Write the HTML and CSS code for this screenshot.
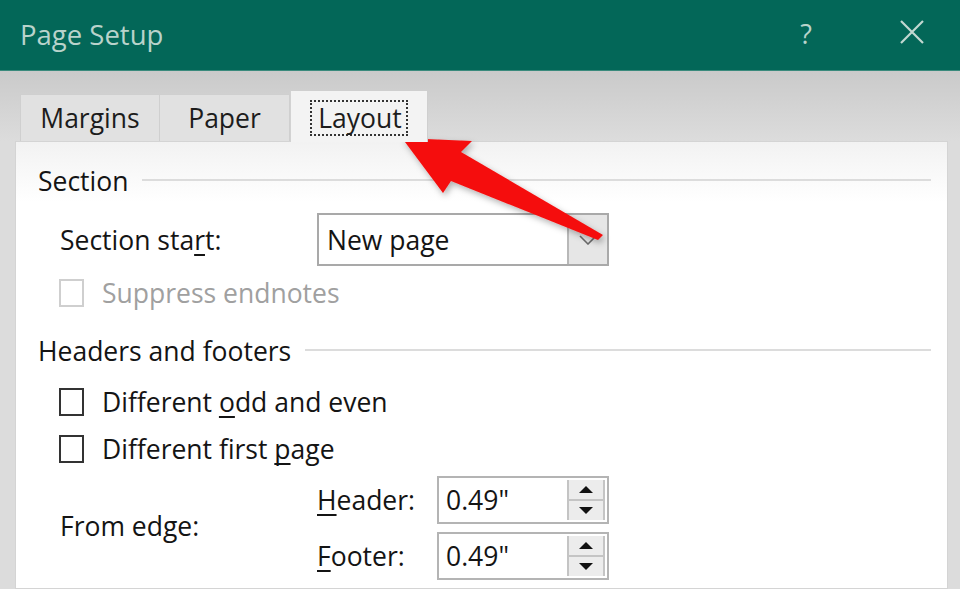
FILE: index.html
```html
<!DOCTYPE html>
<html lang="en">
<head>
<meta charset="utf-8">
<title>Page Setup</title>
<link rel="stylesheet" href="styles.css">
</head>
<body>
<div class="dialog">
  <header class="titlebar">
    <span class="title">Page Setup</span>
    <span class="help">?</span>
    <svg class="close" width="26" height="26" viewBox="0 0 26 26"><path d="M2 2L24 24M24 2L2 24" stroke="#c2d8d1" stroke-width="2.2" fill="none"/></svg>
  </header>
  <div class="body">
    <nav class="tabs">
      <div class="tab">Margins</div>
      <div class="tab">Paper</div>
      <div class="tab active"><span class="focus">Layout</span></div>
    </nav>
    <main class="panel">
      <div class="legend"><span>Section</span><i class="rule"></i></div>
      <div class="row start-row">
        <span class="label">Section sta<u>r</u>t:</span>
        <div class="select"><span class="value">New page</span><span class="drop"><svg width="18" height="10" viewBox="0 0 18 10"><path d="M1 1L9 9L17 1" stroke="#6a6a6a" stroke-width="1.6" fill="none"/></svg></span></div>
      </div>
      <label class="check disabled"><span class="box"></span><span>Suppress endnotes</span></label>
      <div class="legend legend2"><span>Headers and footers</span><i class="rule"></i></div>
      <label class="check"><span class="box"></span><span>Different <u>o</u>dd and even</span></label>
      <label class="check second"><span class="box"></span><span>Different first <u>p</u>age</span></label>
      <div class="edge">
        <span class="edge-label">From edge:</span>
        <span class="sub sub1"><u>H</u>eader:</span>
        <div class="spin spin1"><span class="value">0.49"</span><span class="arrows"><span class="up"></span><span class="down"></span></span></div>
        <span class="sub sub2"><u>F</u>ooter:</span>
        <div class="spin spin2"><span class="value">0.49"</span><span class="arrows"><span class="up"></span><span class="down"></span></span></div>
      </div>
    </main>
  </div>
  <svg class="arrow" width="960" height="589" viewBox="0 0 960 589">
    <defs>
      <filter id="sh" x="-20%" y="-20%" width="140%" height="140%">
        <feDropShadow dx="2" dy="3" stdDeviation="3" flood-color="#000" flood-opacity="0.3"/>
      </filter>
    </defs>
    <polygon points="402,138 472,141 461,152 603,235 598,240 451,181 443,193" fill="#f50f0f" filter="url(#sh)"/>
  </svg>
</div>
</body>
</html>
```
FILE: styles.css
```css
* { box-sizing: border-box; }
html, body { margin: 0; padding: 0; }
body {
  width: 960px;
  height: 589px;
  overflow: hidden;
  font-family: "Open Sans", "Noto Sans", sans-serif;
  color: #141414;
}
.dialog {
  position: relative;
  width: 960px;
  height: 589px;
  background: #dcdcdc;
}
.titlebar {
  height: 71px;
  background: #036758;
  border-bottom: 1px solid #3a8a7c;
  display: flex;
  align-items: center;
  padding: 0 35px 0 20px;
  color: #b9d3cb;
}
.title {
  font-size: 27.5px;
  flex: 1;
  margin-top: -2px;
}
.help {
  font-size: 27px;
  margin-right: 87px;
  margin-top: -4px;
}
.close { margin-top: -6px; }
.body {
  height: 518px;
  background: linear-gradient(#cacaca, #dcdcdc 70px);
  padding: 0 12px 0 15px;
  display: flex;
  flex-direction: column;
}
.tabs {
  display: flex;
  padding: 18px 0 0 5px;
  height: 70px;
  align-items: flex-end;
  position: relative;
  z-index: 1;
}
.tab {
  height: 47px;
  border: 1px solid #cfcfcf;
  border-bottom: none;
  background: #e1e1e1;
  font-size: 26.5px;
  display: flex;
  align-items: center;
  justify-content: center;
  color: #1c1c1c;
}
.tab:nth-child(1) { width: 140px; }
.tab:nth-child(2) { width: 130px; border-left: none; }
.tab.active {
  width: 138px;
  height: 52px;
  background: #f3f3f3;
  margin-bottom: -1px;
  border-left: 1px solid #d2d2d2;
}
.focus {
  border: 2px dotted #333;
  padding: 0 4px 0 6px;
  line-height: 32px;
  margin-top: 3px;
}
.panel {
  flex: 1;
  background: linear-gradient(#f2f2f2, #ffffff 60px);
  border: 1px solid #d4d4d4;
  padding: 22px 16px 0 22px;
  display: flex;
  flex-direction: column;
  font-size: 26.5px;
  line-height: 30px;
}
.legend {
  display: flex;
  align-items: center;
  height: 34px;
  gap: 14px;
}
.rule {
  flex: 1;
  height: 2px;
  background: #dcdcdc;
  margin-top: -2px;
}
.row {
  display: flex;
  align-items: center;
  padding-left: 22px;
}
.start-row { margin-top: 15px; height: 53px; }
.label { width: 257px; }
.select {
  width: 292px;
  height: 53px;
  border: 2px solid #a9a9a9;
  background: #fff;
  display: flex;
  align-items: stretch;
}
.select .value { flex: 1; padding-left: 8px; display: flex; align-items: center; }
.drop {
  width: 40px;
  background: #e6e6e6;
  border-left: 2px solid #b8b8b8;
  display: flex;
  align-items: center;
  justify-content: center;
}
.check {
  display: flex;
  align-items: center;
  gap: 18px;
  padding-left: 21px;
  height: 30px;
}
.check.disabled { color: #a0a0a0; margin-top: 12px; }
.box {
  width: 25px;
  height: 28px;
  border: 2px solid #333;
  background: #fff;
  flex: none;
}
.disabled .box { border-color: #cfcfcf; }
.legend2 { margin-top: 26px; }
.check:not(.disabled) { margin-top: 19px; }
.check.second { margin-top: 17px; }
.edge {
  display: grid;
  grid-template-columns: 257px 120px 172px;
  grid-template-rows: 48px 48px;
  row-gap: 8px;
  padding-left: 22px;
  margin-top: 12px;
  align-items: center;
}
.edge-label { grid-row: 1 / span 2; grid-column: 1; margin-top: -4px; }
.sub1 { grid-row: 1; grid-column: 2; }
.sub2 { grid-row: 2; grid-column: 2; }
.spin1 { grid-row: 1; grid-column: 3; }
.spin2 { grid-row: 2; grid-column: 3; }
.spin {
  height: 48px;
  border: 2px solid #b4b4b4;
  background: #fff;
  display: flex;
}
.spin .value { flex: 1; padding-left: 7px; display: flex; align-items: center; }
.arrows {
  width: 38px;
  margin: 2px 2px 2px 0;
  display: flex;
  flex-direction: column;
  border-left: 2px solid #c4c4c4;
  border-right: 2px solid #c4c4c4;
}
.arrows span {
  flex: 1;
  background: #ececec;
  display: flex;
  align-items: center;
  justify-content: center;
}
.arrows .up { border-bottom: 2px solid #c4c4c4; }
.up::after {
  content: "";
  border-left: 7px solid transparent;
  border-right: 7px solid transparent;
  border-bottom: 7px solid #111;
}
.down::after {
  content: "";
  border-left: 7px solid transparent;
  border-right: 7px solid transparent;
  border-top: 7px solid #111;
}
u { text-decoration-thickness: 2px; text-underline-offset: 4px; text-decoration-skip-ink: none; }
.arrow {
  position: absolute;
  left: 0;
  top: 0;
  pointer-events: none;
}
```
